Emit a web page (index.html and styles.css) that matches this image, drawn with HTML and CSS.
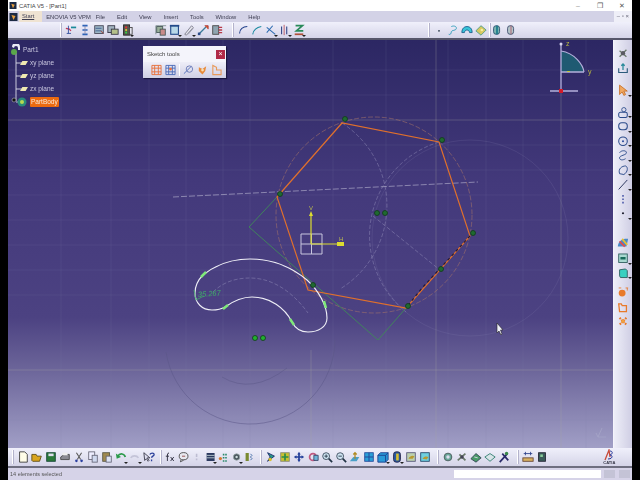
FILE: index.html
```html
<!DOCTYPE html>
<html lang="en">
<head>
<meta charset="utf-8">
<title>CATIA V5 - [Part1]</title>
<link rel="stylesheet" href="styles.css">
</head>
<body>
<svg class="defs" width="0" height="0">
  <symbol id="doc" viewBox="0 0 14 14"><path d="M3 1h6l3 3v9H3z" fill="#fffde8" stroke="#333"/></symbol>
  <symbol id="open" viewBox="0 0 14 14"><path d="M1 11V4h5l1 2h5l-2 6H2z" fill="#d9a520" stroke="#5a4a10"/></symbol>
  <symbol id="save" viewBox="0 0 14 14"><rect x="2" y="2" width="10" height="10" fill="#2a7a3a" stroke="#143"/><rect x="4" y="3" width="6" height="3" fill="#dde"/></symbol>
  <symbol id="print" viewBox="0 0 14 14"><path d="M2 7l4-3h6v6H2z" fill="#8a8a92" stroke="#444"/><rect x="4" y="2" width="6" height="3" fill="#eee"/></symbol>
  <symbol id="cut" viewBox="0 0 14 14"><path d="M4 2l5 8M10 2L5 10" stroke="#555" fill="none" stroke-width="1.2"/><circle cx="4" cy="11.500" r="1.500" fill="#2a3fa0"/><circle cx="10" cy="11.500" r="1.500" fill="#2a3fa0"/></symbol>
  <symbol id="copy" viewBox="0 0 14 14"><rect x="2" y="1" width="7" height="9" fill="#eef" stroke="#667"/><rect x="6" y="5" width="6" height="8" fill="#cfd8ee" stroke="#667"/></symbol>
  <symbol id="paste" viewBox="0 0 14 14"><rect x="2" y="2" width="8" height="10" fill="#a08a50" stroke="#554"/><rect x="6" y="6" width="6" height="7" fill="#dde4f4" stroke="#667"/></symbol>
  <symbol id="undo" viewBox="0 0 14 14"><path d="M3 6c3-4 8-3 9 1" fill="none" stroke="#2a9a4a" stroke-width="2"/><path d="M1 3l1 6 5-2z" fill="#2a9a4a"/></symbol>
  <symbol id="redo" viewBox="0 0 14 14"><path d="M2 8c2-3 7-3 9 0" fill="none" stroke="#c4c4d8" stroke-width="2"/></symbol>
  <symbol id="help" viewBox="0 0 14 14"><path d="M1 2l1 9 2-2 2 3 1-1-2-3h3z" fill="#dde" stroke="#334"/><path d="M8 4c1-2 5-2 5 0s-3 2-3 4M10 10v2" fill="none" stroke="#2a3f9a" stroke-width="1.500"/></symbol>
  <symbol id="fx" viewBox="0 0 14 14"><path d="M5 2c-2 0-2 2-2 4v6M1 6h4M7 7l4 5M11 7l-4 5" fill="none" stroke="#223" stroke-width="1.100"/></symbol>
  <symbol id="bubble" viewBox="0 0 14 14"><ellipse cx="7" cy="6" rx="5.500" ry="4.500" fill="#e8e8f0" stroke="#333"/><path d="M4 10l-1 3 4-2" fill="#e8e8f0" stroke="#333"/><path d="M5 6h4" stroke="#833"/></symbol>
  <symbol id="faded" viewBox="0 0 14 14"><path d="M7 3v4M7 9v2" stroke="#bdbdd2" stroke-width="2"/></symbol>
  <symbol id="table" viewBox="0 0 14 14"><rect x="2" y="2" width="10" height="10" fill="#2c3a60"/><path d="M2 5h10M2 8h10" stroke="#cdd"/></symbol>
  <symbol id="tree" viewBox="0 0 14 14"><circle cx="3" cy="9" r="2" fill="#d87a30"/><path d="M6 4h6M6 8h6M6 12h6" stroke="#2a8a6a" stroke-width="2" stroke-dasharray="2 1"/></symbol>
  <symbol id="gear" viewBox="0 0 14 14"><circle cx="7" cy="7" r="4" fill="#46525a" stroke="#9aa"/><circle cx="7" cy="7" r="1.500" fill="#cdd"/></symbol>
  <symbol id="cube2" viewBox="0 0 14 14"><path d="M2 2h4v10H2z" fill="#7a8a30"/><path d="M8 3l2 2-2 2 2 2-2 2" stroke="#2a5a9a" fill="none"/></symbol>
  <symbol id="fly" viewBox="0 0 14 14"><path d="M3 2l8 4-8 6 3-5z" fill="#2a9a8a" stroke="#126"/><circle cx="6" cy="10" r="2" fill="#d8c030"/></symbol>
  <symbol id="fit" viewBox="0 0 14 14"><rect x="2" y="2" width="10" height="10" fill="#c8c030" stroke="#887"/><path d="M7 3v8M3 7h8" stroke="#2a8a4a" stroke-width="2"/></symbol>
  <symbol id="pan" viewBox="0 0 14 14"><path d="M7 1l2 3H8v2h2V5l3 2-3 2V8H8v2h1l-2 3-2-3h1V8H4v1L1 7l3-2v1h2V4H5z" fill="#24409a"/></symbol>
  <symbol id="rot" viewBox="0 0 14 14"><circle cx="7" cy="7" r="4" fill="none" stroke="#c05a80" stroke-width="2"/><path d="M8 5h5v6H8z" fill="#6fb4d8" stroke="#346"/></symbol>
  <symbol id="zin" viewBox="0 0 14 14"><circle cx="6" cy="6" r="4" fill="#cfe4f2" stroke="#345"/><path d="M9 9l4 4" stroke="#234" stroke-width="2"/><path d="M4 6h4M6 4v4" stroke="#234"/></symbol>
  <symbol id="zout" viewBox="0 0 14 14"><circle cx="6" cy="6" r="4" fill="#cfe4f2" stroke="#345"/><path d="M9 9l4 4" stroke="#234" stroke-width="2"/><path d="M4 6h4" stroke="#234"/></symbol>
  <symbol id="normal" viewBox="0 0 14 14"><path d="M1 12l4-5h7l-3 5z" fill="#4aa0c8"/><path d="M7 9V2M5 4l2-2 2 2" stroke="#b08a20" fill="none" stroke-width="1.500"/></symbol>
  <symbol id="mview" viewBox="0 0 14 14"><rect x="2" y="2" width="10" height="10" fill="#2aa0d8" stroke="#224a9a"/><path d="M7 2v10M2 7h10" stroke="#234a9a" stroke-width="1.200"/></symbol>
  <symbol id="cube" viewBox="0 0 14 14"><path d="M1 5l3-3h9v8l-3 3H1z" fill="#2a9ad8" stroke="#1a3a8a"/><path d="M1 5h9v8M10 5l3-3" fill="none" stroke="#1a3a8a"/></symbol>
  <symbol id="shade" viewBox="0 0 14 14"><rect x="3" y="1" width="8" height="12" rx="3" fill="#2a5aa0" stroke="#224"/><rect x="6" y="3" width="3" height="8" fill="#d8c030"/></symbol>
  <symbol id="hide" viewBox="0 0 14 14"><rect x="2" y="2" width="10" height="10" fill="#bcd0b0" stroke="#557"/><path d="M4 9c2-4 5-4 7-3l-2 3z" fill="#b89a30"/></symbol>
  <symbol id="swap" viewBox="0 0 14 14"><rect x="2" y="2" width="10" height="10" fill="#6fd0e0" stroke="#246"/><path d="M4 9c2-3 5-3 7-2l-2 3z" fill="#b89a30"/></symbol>
  <symbol id="cog2" viewBox="0 0 14 14"><circle cx="7" cy="7" r="4.500" fill="#6aa89a" stroke="#455"/><circle cx="7" cy="7" r="2" fill="#dde"/></symbol>
  <symbol id="pin" viewBox="0 0 14 14"><path d="M2 11l9-8M4 4l7 7" stroke="#6a7a6a" stroke-width="2"/><circle cx="7" cy="7" r="2" fill="#445"/></symbol>
  <symbol id="hat" viewBox="0 0 14 14"><path d="M1 9l6-6 6 5-6 5z" fill="#4a9a6a" stroke="#345"/><path d="M5 7l4 1" stroke="#dde"/></symbol>
  <symbol id="hat2" viewBox="0 0 14 14"><path d="M1 7l6-4 6 4-6 5z" fill="#d8e4e8" stroke="#2a7a6a"/></symbol>
  <symbol id="tool" viewBox="0 0 14 14"><path d="M2 13l9-10M5 3l7 8" stroke="#2a2a6a" stroke-width="2"/><circle cx="10" cy="3" r="2" fill="#3a8a4a"/></symbol>
  <symbol id="ruler" viewBox="0 0 14 14"><path d="M2 3h10M4 1v4M10 1v4" stroke="#2a3f8a"/><rect x="1" y="8" width="12" height="4" fill="#d8b060" stroke="#643"/></symbol>
  <symbol id="box" viewBox="0 0 14 14"><rect x="3" y="2" width="8" height="10" fill="#3a5a58" stroke="#223"/><rect x="5" y="4" width="3" height="3" fill="#8c9"/></symbol>
  <symbol id="t1" viewBox="0 0 14 14"><path d="M1 5l4 1 2 2" fill="none" stroke="#c23a5a" stroke-width="1.500"/><path d="M7 4h6" stroke="#1a8a9a" stroke-width="2"/><path d="M4 2v9M2 11h5" stroke="#2a4a9a"/></symbol>
  <symbol id="t2" viewBox="0 0 14 14"><path d="M4 2h6M4 7h6M4 12h6" stroke="#2a62b8" stroke-width="2"/><path d="M7 2v10" stroke="#88a"/></symbol>
  <symbol id="t3" viewBox="0 0 14 14"><rect x="2" y="2" width="10" height="9" fill="#9ab4c4" stroke="#445"/><path d="M3 5h7M3 8h7" stroke="#3a5a8a"/><path d="M9 8l3 3" stroke="#b83a2a"/></symbol>
  <symbol id="t4" viewBox="0 0 14 14"><rect x="1" y="2" width="8" height="8" fill="#a4b4c0" stroke="#334"/><rect x="5" y="6" width="8" height="6" fill="#b4c08a" stroke="#334"/></symbol>
  <symbol id="t5" viewBox="0 0 14 14"><rect x="3" y="1" width="7" height="12" fill="#56564e" stroke="#222"/><circle cx="6" cy="4" r="1.300" fill="#d33"/><circle cx="6" cy="7" r="1.300" fill="#dc3"/><circle cx="6" cy="10" r="1.300" fill="#3c4"/><rect x="10" y="4" width="3" height="8" fill="#e4e4ee" stroke="#444"/></symbol>
  <symbol id="s1" viewBox="0 0 14 14"><path d="M1 12V2h4l8 0" fill="none" stroke="#7a8a8a"/><rect x="2" y="3" width="7" height="7" fill="#9ab09a" stroke="#455"/><rect x="6" y="6" width="6" height="7" fill="#c88a8a" stroke="#455"/></symbol>
  <symbol id="s2" viewBox="0 0 14 14"><rect x="2" y="2" width="9" height="10" fill="#b8d8e8" stroke="#234a8a" stroke-width="1.300"/><path d="M1 2h11" stroke="#234a8a" stroke-width="2"/></symbol>
  <symbol id="s3" viewBox="0 0 14 14"><path d="M2 12L10 2l2 2-8 9z" fill="#e4e4ec" stroke="#7a7a8a"/><path d="M6 12l6-7" stroke="#9a9aa8"/></symbol>
  <symbol id="s4" viewBox="0 0 14 14"><path d="M2 12L11 3" stroke="#3a7a9a" stroke-width="1.500"/><path d="M9 2h4v4" fill="#d85a30" stroke="#a33"/><rect x="1" y="10" width="3" height="3" fill="#2a4a8a"/></symbol>
  <symbol id="s5" viewBox="0 0 14 14"><rect x="2" y="2" width="7" height="10" fill="#8fa4b0" stroke="#444"/><path d="M9 4h4M9 7h4M9 10h4" stroke="#b83a4a" stroke-width="1.500"/></symbol>
  <symbol id="c1" viewBox="0 0 14 14"><path d="M3 11C3 6 7 3 12 3" fill="none" stroke="#1f3f8a" stroke-width="1.200"/></symbol>
  <symbol id="c2" viewBox="0 0 14 14"><path d="M2 12C3 7 6 4 12 3" fill="none" stroke="#1a8aa0" stroke-width="1.200"/></symbol>
  <symbol id="c3" viewBox="0 0 14 14"><path d="M2 4l10 8M2 10l7-8" stroke="#2a6ab0" stroke-width="1.200"/></symbol>
  <symbol id="c4" viewBox="0 0 14 14"><path d="M3 3v9M9 3v9" stroke="#3a4a8a" stroke-width="1.300"/><path d="M6 1v12" stroke="#b8505a"/></symbol>
  <symbol id="c5" viewBox="0 0 14 14"><path d="M3 2h8L4 8h8" fill="none" stroke="#2a8a5a" stroke-width="2"/><path d="M2 12h10" stroke="#b0503a" stroke-width="2"/></symbol>
  <symbol id="dot" viewBox="0 0 14 14"><circle cx="7" cy="8" r="1" fill="#234"/></symbol>
  <symbol id="spline" viewBox="0 0 14 14"><path d="M2 12c2 1 3-1 3-3s6-1 6-4-4-3-6-2" fill="none" stroke="#2a9ab8"/></symbol>
  <symbol id="hood" viewBox="0 0 14 14"><path d="M1 10c0-5 3-7 6-7s6 2 6 7h-3c0-2-2-3-3-3s-3 1-3 3z" fill="#38c4d8" stroke="#1a5a8a"/></symbol>
  <symbol id="leaf" viewBox="0 0 14 14"><path d="M1 8l6-6 6 5-6 6z" fill="#d8c860" stroke="#4a9a8a"/><circle cx="8" cy="7" r="1.500" fill="#f4f0a0"/></symbol>
  <symbol id="q1" viewBox="0 0 14 14"><rect x="3" y="2" width="7" height="10" rx="3" fill="#7ab4b0" stroke="#244a6a"/><path d="M7 2v10" stroke="#1a7a8a" stroke-width="2"/></symbol>
  <symbol id="q2" viewBox="0 0 14 14"><rect x="3" y="2" width="7" height="10" rx="3" fill="#b4c4c8" stroke="#3a4a6a"/><path d="M7 2v10" stroke="#b05a6a"/></symbol>
  <symbol id="r1" viewBox="0 0 14 14"><path d="M3 11l8-8M3 4l8 7" stroke="#6a7a6a" stroke-width="1.500"/><circle cx="7" cy="7" r="2.500" fill="#5a5a62"/></symbol>
  <symbol id="r2" viewBox="0 0 14 14"><path d="M2 7v5h10V7" fill="none" stroke="#2a5a7a" stroke-width="1.300"/><path d="M7 9V2M5 4l2-2 2 2" fill="none" stroke="#2a8a9a" stroke-width="1.500"/></symbol>
  <symbol id="r3" viewBox="0 0 14 14"><path d="M3 1v11l3-3 2 4 2-1-2-4h4z" fill="#f0a860" stroke="#c8702a"/></symbol>
  <symbol id="r4" viewBox="0 0 14 14"><circle cx="8" cy="4" r="2.500" fill="none" stroke="#2a4a8a"/><rect x="2" y="7" width="10" height="6" rx="2" fill="none" stroke="#2a4a8a" stroke-width="1.200"/></symbol>
  <symbol id="r5" viewBox="0 0 14 14"><rect x="2" y="3" width="10" height="8" rx="3.500" fill="none" stroke="#2a4a8a" stroke-width="1.200"/></symbol>
  <symbol id="r6" viewBox="0 0 14 14"><circle cx="7" cy="7" r="5" fill="none" stroke="#2a4a8a" stroke-width="1.200"/><circle cx="7" cy="7" r="1.200" fill="#2a4a9a"/></symbol>
  <symbol id="r7" viewBox="0 0 14 14"><path d="M3 4c2-3 8-3 8 0s-8 3-8 6 4 3 7 1" fill="none" stroke="#2a4a8a" stroke-width="1.100"/></symbol>
  <symbol id="r8" viewBox="0 0 14 14"><path d="M3 11c-2-6 3-9 7-9 3 1 3 7-2 10z" fill="none" stroke="#2a4a8a" stroke-width="1.100"/></symbol>
  <symbol id="r9" viewBox="0 0 14 14"><path d="M2 13L12 2" stroke="#26305a" stroke-width="1.100"/></symbol>
  <symbol id="r10" viewBox="0 0 14 14"><path d="M7 2v10" stroke="#2a3a9a" stroke-width="1.500" stroke-dasharray="2 2"/></symbol>
  <symbol id="r11" viewBox="0 0 14 14"><circle cx="7" cy="7" r="1.300" fill="#223"/></symbol>
  <symbol id="r12" viewBox="0 0 14 14"><path d="M1 12C1 5 8 2 13 3l-2 9z" fill="#4a8ac8"/><path d="M3 6l6 6" stroke="#e84a4a" stroke-width="2"/><path d="M6 3l6 7" stroke="#e8c030" stroke-width="2"/></symbol>
  <symbol id="r13" viewBox="0 0 14 14"><rect x="2" y="2" width="10" height="10" fill="#a8d8d0" stroke="#2a5a5a"/><path d="M4 7h6" stroke="#186a5a" stroke-width="3"/></symbol>
  <symbol id="r14" viewBox="0 0 14 14"><path d="M3 3l7-1 2 2v8H4l-1-2z" fill="#38d0c0" stroke="#2a5a5a"/></symbol>
  <symbol id="r15" viewBox="0 0 14 14"><circle cx="6" cy="8" r="4" fill="#e87a2a"/><path d="M2 2h3M10 2h3M12 2v3" stroke="#e87a2a"/></symbol>
  <symbol id="r16" viewBox="0 0 14 14"><path d="M2 3h3l1 2h5v7H3z" fill="none" stroke="#e87a2a" stroke-width="1.500"/></symbol>
  <symbol id="r17" viewBox="0 0 14 14"><path d="M3 3l8 8M11 3l-8 8" stroke="#e87a2a" stroke-width="2.500" stroke-dasharray="2 1"/><circle cx="7" cy="7" r="2" fill="#f0a040"/></symbol>
</svg>

<div class="window">
  <header class="titlebar">
    <svg class="app-icon" viewBox="0 0 8 8"><rect width="8" height="8" fill="#1c2a44"/><path d="M2 2l4 1-2 4z" fill="#e8a040"/></svg>
    <span class="title">CATIA V5 - [Part1]</span>
    <span class="win-controls"><span class="min">–</span><span class="max">❐</span><span class="close">✕</span></span>
  </header>
  <nav class="menubar">
    <svg class="menu-icon" viewBox="0 0 8 8"><rect width="8" height="8" fill="#1c2a44"/><path d="M2 2l4 1-2 4z" fill="#e8a040"/></svg>
    <span class="menu-start">Start</span>
    <span class="menu-enovia">ENOVIA V5 VPM</span>
    <span class="menu-item menu-first">File</span>
    <span class="menu-item">Edit</span>
    <span class="menu-item">View</span>
    <span class="menu-item">Insert</span>
    <span class="menu-item">Tools</span>
    <span class="menu-item">Window</span>
    <span class="menu-item">Help</span>
    <span class="doc-controls">– ▫ ×</span>
  </nav>
  <div class="toolbar top">
    <div class="group g1 sep"><svg class="ic"><use href="#t1"/></svg><svg class="ic"><use href="#t2"/></svg><svg class="ic"><use href="#t3"/></svg><svg class="ic"><use href="#t4"/></svg><span class="dd"><svg class="ic"><use href="#t5"/></svg></span></div>
    <div class="group g2"><svg class="ic"><use href="#s1"/></svg><span class="dd"><svg class="ic"><use href="#s2"/></svg></span><span class="dd"><svg class="ic"><use href="#s3"/></svg></span><svg class="ic"><use href="#s4"/></svg><svg class="ic"><use href="#s5"/></svg></div>
    <div class="group g3 sep"><svg class="ic"><use href="#c1"/></svg><svg class="ic"><use href="#c2"/></svg><span class="dd"><svg class="ic"><use href="#c3"/></svg></span><span class="dd"><svg class="ic"><use href="#c4"/></svg></span><span class="dd"><svg class="ic"><use href="#c5"/></svg></span></div>
    <div class="group g4 sep"><svg class="ic"><use href="#dot"/></svg><svg class="ic"><use href="#spline"/></svg><svg class="ic"><use href="#hood"/></svg><svg class="ic"><use href="#leaf"/></svg></div>
    <div class="group g5 sep"><svg class="ic"><use href="#q1"/></svg><svg class="ic"><use href="#q2"/></svg></div>
  </div>

  <main class="main">
    <section class="viewport">
      <svg class="scene" viewBox="8 40 605 408" preserveAspectRatio="none">
        <defs>
          <linearGradient id="bg" x1="0" y1="0" x2="0" y2="1">
            <stop offset="0" stop-color="#2c2763"/>
            <stop offset="0.35" stop-color="#43397b"/>
            <stop offset="0.68" stop-color="#4c4282"/>
            <stop offset="0.8" stop-color="#6a6398"/>
            <stop offset="1" stop-color="#a19fc6"/>
          </linearGradient>
        </defs>
        <rect x="8" y="40" width="605" height="408" fill="url(#bg)"/>
        <g class="grid-minor">
          <path d="M61 40V448M111 40V448M149 40V448M186 40V448M223 40V448M250 40V448M333 40V448M386 40V448M448 40V448M486 40V448M523 40V448M586 40V448"/>
          <path d="M8 70H613M8 95H613M8 145H613M8 170H613M8 195H613M8 220H613M8 245H613M8 270H613M8 295H613M8 370H613M8 395H613M8 420H613"/>
        </g>
        <g class="grid-major">
          <path d="M436 40V448M561 92V448M311 350V448"/>
          <path d="M8 120H613M8 370H613"/>
        </g>
        <g class="construct-faint">
          <circle cx="470" cy="238" r="98"/>
        </g>
        <g class="construct-low">
          <path d="M166 352A85 85 0 0 0 335 340"/>
          <path d="M222 377Q252 395 287 368"/>
        </g>
        <g class="construct">
          <path d="M342 123A98 98 0 0 1 340 289"/>
          <path d="M439 142A98 98 0 0 0 406 312"/>
          <path d="M373 216L440 270"/>
          <path d="M213 292C225 280 240 278 250 278C275 278 295 295 308 313"/>
        </g>
        <path class="dash-line" d="M173 197L478 182"/>
        <circle class="circum" cx="374" cy="215" r="98"/>
        <path class="green-line" d="M277 197L249 227L378 340L406 308"/>
        <path class="orange-line" d="M277 197L342 123L439 142L470 236L406 308L308 290Z"/>
        <path class="dark-dash" d="M470 236L422 288L406 308"/>
        <path class="kidney" d="M203 275C218 263 235 259 250 259C275 259 295 270 307 280C318 290 327 305 327 318C327 327 318 332 308 332C300 332 295 328 292 322C285 308 270 297 252 297C240 297 232 302 225 307C220 310 216 310 212 310C202 310 195 303 195 293C195 285 198 280 203 275Z"/>
        <path class="kidney-hi" d="M201 277L206 272M223 309L228 305M290 319L294 325M324 301L326 308"/>
        <text class="dim" x="198" y="297" transform="rotate(-4 198 297)">35.267</text>
        <path class="dim-line" d="M194 290L196 300L204 296"/>
        <g class="marks">
          <circle cx="345" cy="119" r="2.500"/><circle cx="442" cy="140" r="2.500"/><circle cx="473" cy="233" r="2.500"/>
          <circle cx="280" cy="194" r="2.500"/><circle cx="377" cy="213" r="2.500"/><circle cx="385" cy="213" r="2.500"/>
          <circle cx="441" cy="269" r="2.500"/><circle cx="408" cy="306" r="2.500"/><circle cx="313" cy="285" r="2.500"/>
          <circle class="mark-bright" cx="255" cy="338" r="2.500"/><circle class="mark-bright" cx="263" cy="338" r="2.500"/>
        </g>
        <g class="axis">
          <path class="axis-box" d="M301 234H322V254H301ZM311.500 234V254M301 244H322"/>
          <path class="axis-yellow" d="M311 244V214M311 244H344"/>
          <path class="axis-tip" d="M309 216L311 211L313 216ZM337 242H344V246H337Z"/>
          <text class="axis-label" x="339" y="241">H</text>
          <text class="axis-label" x="309" y="210">V</text>
        </g>
        <g class="compass">
          <path class="c-fill" d="M561 51C575 53 583 65 584 72H561Z"/>
          <path class="c-arc" d="M561 51C575 53 583 65 584 72"/>
          <path class="c-line" d="M561 44V91M550 91H578M561 72H584"/>
          <circle class="c-top" cx="561" cy="44" r="1.500"/>
          <rect class="c-red" x="559" y="89" width="4" height="4"/>
          <text class="c-label" x="566" y="46">z</text>
          <text class="c-label" x="588" y="74">y</text>
          <path class="c-tick" d="M567 71.500H570"/>
        </g>
        <path class="cursor" d="M497 323V333L499 331L501 335L502 334L500.500 330H503Z"/>
        <g class="logo-mini"><path d="M598 437L596 433M598 437H606M598 437L602 428"/></g>
      </svg>

      <aside class="tree">
        <svg class="tree-lines" viewBox="0 0 40 70"><path d="M6 8V58M6 20H12M6 33H12M6 46H12M6 59H12"/><circle class="tree-exp" cx="4" cy="57" r="2"/></svg>
        <div class="tree-row root"><svg class="node-ic" viewBox="0 0 12 12"><path d="M2 3a4 4 0 0 1 8 0v3h-2V4a2 2 0 0 0-4 0z" fill="#e8e8f4"/><circle cx="4" cy="8" r="3" fill="#5aa84a"/></svg><span>Part1</span></div>
        <div class="tree-row plane"><svg class="plane-ic" viewBox="0 0 10 5"><path d="M3 0h7L7 5H0z"/></svg><span>xy plane</span></div>
        <div class="tree-row plane"><svg class="plane-ic" viewBox="0 0 10 5"><path d="M3 0h7L7 5H0z"/></svg><span>yz plane</span></div>
        <div class="tree-row plane"><svg class="plane-ic" viewBox="0 0 10 5"><path d="M3 0h7L7 5H0z"/></svg><span>zx plane</span></div>
        <div class="tree-row body"><svg class="node-ic" viewBox="0 0 12 12"><circle cx="6" cy="6" r="4.500" fill="#2a8a7a"/><circle cx="6" cy="6" r="2" fill="#b8d850"/></svg><span class="selected">PartBody</span></div>
      </aside>

      <div class="palette">
        <div class="palette-head"><span>Sketch tools</span><span class="palette-close">×</span></div>
        <div class="palette-body">
          <svg class="pic" viewBox="0 0 12 12"><path d="M1 1h10v10H1zM1 4h10M1 8h10M4 1v10M8 1v10" fill="none" stroke="#e8703a"/></svg>
          <svg class="pic" viewBox="0 0 12 12"><path d="M1 1h10v10H1zM1 4h10M1 8h10M4 1v10M8 1v10" fill="none" stroke="#4a6ab8"/><circle cx="6" cy="5" r="1.500" fill="#e8703a"/></svg>
          <span class="pal-sep"></span>
          <svg class="pic" viewBox="0 0 12 12"><path d="M1 10L9 2" stroke="#4a6ab8"/><circle cx="7" cy="5" r="3.500" fill="none" stroke="#6a7ab8"/></svg>
          <svg class="pic" viewBox="0 0 12 12"><path d="M2 3l4 2 4-3-1 5-3 4-4-4z" fill="#e88a3a"/><circle cx="6" cy="6" r="1.500" fill="#f8e0b0"/></svg>
          <svg class="pic" viewBox="0 0 12 12"><path d="M2 1v10h9V6H6V3z" fill="none" stroke="#e89a5a" stroke-width="1.200"/></svg>
        </div>
      </div>
    </section>
    <aside class="toolbar side">
      <svg class="ic r-first"><use href="#r1"/></svg><svg class="ic"><use href="#r2"/></svg>
      <span class="dd r-a"><svg class="ic"><use href="#r3"/></svg></span>
      <span class="dd r-b"><svg class="ic"><use href="#r4"/></svg></span><span class="dd"><svg class="ic"><use href="#r5"/></svg></span><span class="dd"><svg class="ic"><use href="#r6"/></svg></span><span class="dd"><svg class="ic"><use href="#r7"/></svg></span><span class="dd"><svg class="ic"><use href="#r8"/></svg></span><span class="dd"><svg class="ic"><use href="#r9"/></svg></span><svg class="ic"><use href="#r10"/></svg><span class="dd"><svg class="ic"><use href="#r11"/></svg></span>
      <svg class="ic r-c"><use href="#r12"/></svg>
      <span class="dd r-d"><svg class="ic"><use href="#r13"/></svg></span><span class="dd"><svg class="ic"><use href="#r14"/></svg></span>
      <svg class="ic r-e"><use href="#r15"/></svg><svg class="ic"><use href="#r16"/></svg><svg class="ic"><use href="#r17"/></svg>
    </aside>
  </main>

  <div class="toolbar bottom">
    <div class="group b1 sep"><svg class="ic"><use href="#doc"/></svg><svg class="ic"><use href="#open"/></svg><svg class="ic"><use href="#save"/></svg><svg class="ic"><use href="#print"/></svg><svg class="ic"><use href="#cut"/></svg><svg class="ic"><use href="#copy"/></svg><svg class="ic"><use href="#paste"/></svg><span class="dd"><svg class="ic"><use href="#undo"/></svg></span><span class="dd"><svg class="ic"><use href="#redo"/></svg></span><svg class="ic"><use href="#help"/></svg></div>
    <div class="group b2 sep"><svg class="ic"><use href="#fx"/></svg><svg class="ic"><use href="#bubble"/></svg><svg class="ic"><use href="#faded"/></svg><span class="dd"><svg class="ic"><use href="#table"/></svg></span><svg class="ic"><use href="#tree"/></svg><span class="dd"><svg class="ic"><use href="#gear"/></svg></span><svg class="ic"><use href="#cube2"/></svg></div>
    <div class="group b3 sep"><svg class="ic"><use href="#fly"/></svg><svg class="ic"><use href="#fit"/></svg><svg class="ic"><use href="#pan"/></svg><svg class="ic"><use href="#rot"/></svg><svg class="ic"><use href="#zin"/></svg><svg class="ic"><use href="#zout"/></svg><svg class="ic"><use href="#normal"/></svg><svg class="ic"><use href="#mview"/></svg><span class="dd"><svg class="ic"><use href="#cube"/></svg></span><span class="dd"><svg class="ic"><use href="#shade"/></svg></span><svg class="ic"><use href="#hide"/></svg><svg class="ic"><use href="#swap"/></svg></div>
    <div class="group b4 sep"><svg class="ic"><use href="#cog2"/></svg><svg class="ic"><use href="#pin"/></svg><svg class="ic"><use href="#hat"/></svg><svg class="ic"><use href="#hat2"/></svg><svg class="ic"><use href="#tool"/></svg></div>
    <div class="group b5 sep"><svg class="ic"><use href="#ruler"/></svg><svg class="ic"><use href="#box"/></svg></div>
    <div class="catia-logo"><svg class="logo-mark" viewBox="0 0 14 12"><path d="M3 11L7 1l1 7" fill="none" stroke="#c84a3a" stroke-width="1.300"/><path d="M8 2c3 0 3 3 0 4 3 0 3 4-2 4" fill="none" stroke="#2a3a9a"/></svg><span>CATIA</span></div>
  </div>
  <footer class="statusbar">
    <span class="status-text">14 elements selected</span>
    <span class="status-field"></span>
    <span class="status-btn"></span>
    <span class="status-btn"></span>
  </footer>
</div>
</body>
</html>
```
FILE: styles.css
```css
* { box-sizing: border-box; }
html, body { margin: 0; height: 100%; background: #000; overflow: hidden; }
body { font-family: "Liberation Sans", Arial, sans-serif; }
.defs { position: absolute; }

.window {
  margin-left: 8px;
  width: 624px;
  height: 480px;
  display: flex;
  flex-direction: column;
  filter: blur(0.4px);
}

.titlebar {
  flex: none;
  height: 11px;
  background: #fff;
  display: flex;
  align-items: center;
  font-size: 5.800px;
  color: #444;
}
.app-icon { width: 8px; height: 7px; margin-left: 1px; }
.title { margin-left: 2px; }
.win-controls { margin-left: auto; display: flex; font-size: 7px; color: #555; }
.win-controls .min { margin-right: 17px; color: #999; }
.win-controls .max { margin-right: 16px; }
.win-controls .close { margin-right: 7px; }

.menubar {
  flex: none;
  height: 11px;
  background: #d3d2e6;
  display: flex;
  align-items: center;
  font-size: 5.800px;
  color: #3c3c50;
}
.menu-icon { width: 9px; height: 8px; margin-left: 1px; }
.menu-start { margin-left: 1px; padding: 0 8px 0 3px; background: #efe3d2; height: 11px; line-height: 10px; text-decoration: underline; }
.menu-enovia { margin-left: 4px; }
.menu-item { margin-left: 12px; }
.menu-first { margin-left: 5px; }
.doc-controls { margin-left: auto; background: #efeff8; font-size: 6px; padding: 0 3px; height: 11px; line-height: 10px; color: #667; }

.toolbar { background: linear-gradient(#f0f0fb, #d5d4e8); }
.toolbar.top {
  flex: none;
  height: 18px;
  display: flex;
  align-items: center;
  border-bottom: 2px solid #56566a;
}
.group { display: flex; align-items: center; position: relative; }
.sep::before {
  content: "";
  position: absolute;
  left: -4px;
  top: 0;
  bottom: 0;
  width: 1px;
  background: #fff;
  box-shadow: 1px 0 0 #b4b3cc;
}
.ic { display: block; width: 14px; height: 14px; flex: none; padding: 1px; }
.dd { position: relative; flex: none; display: block; }
.dd::after {
  content: "";
  position: absolute;
  right: 0;
  bottom: 0;
  border-left: 2px solid transparent;
  border-right: 2px solid transparent;
  border-top: 2px solid #222;
}
.g1 { margin-left: 56px; }
.g2 { margin-left: 20px; }
.g3 { margin-left: 12px; }
.g4 { margin-left: 126px; }
.g5 { margin-left: 2px; }
.g5::before { left: -1px; }

.main { flex: 1; display: flex; min-height: 0; }
.viewport { position: relative; flex: 1; min-width: 0; }
.scene { display: block; width: 100%; height: 100%; }

.grid-minor path { stroke: #8a86b4; stroke-opacity: 0.14; stroke-width: 1; fill: none; }
.grid-major path { stroke: #a8a6a0; stroke-opacity: 0.3; stroke-width: 1; fill: none; }
.construct-faint * { fill: none; stroke: #8d88b4; stroke-opacity: 0.22; stroke-width: 0.8; }
.construct-low path { fill: none; stroke: #5a5688; stroke-opacity: 0.65; stroke-width: 0.8; }
.construct path { fill: none; stroke: #9c98c0; stroke-width: 0.8; stroke-dasharray: 4 2; opacity: 0.55; }
.dash-line { fill: none; stroke: #b4b0cc; stroke-width: 0.8; stroke-dasharray: 6 2; opacity: 0.8; }
.circum { fill: none; stroke: #a0706a; stroke-width: 0.8; stroke-dasharray: 5 2; opacity: 0.75; }
.green-line { fill: none; stroke: #3f8a58; stroke-width: 0.9; }
.orange-line { fill: none; stroke: #e0702c; stroke-width: 1.200; stroke-linejoin: miter; }
.dark-dash { fill: none; stroke: #241a3a; stroke-width: 1.200; stroke-dasharray: 3 3; }
.kidney { fill: none; stroke: #eeeef6; stroke-width: 1.100; }
.kidney-hi { fill: none; stroke: #7fe87a; stroke-width: 2.500; }
.dim { font-size: 7.500px; fill: #3fae68; font-style: italic; }
.dim-line { fill: none; stroke: #3fae68; stroke-width: 0.8; }
.marks circle { fill: #1f6a30; stroke: #123a1a; stroke-width: 0.8; }
.marks .mark-bright { fill: #22b030; stroke: #103a18; }
.axis-box { fill: none; stroke: #c8c6de; stroke-width: 1; }
.axis-yellow { fill: none; stroke: #dcdc30; stroke-width: 1.200; }
.axis-tip { fill: #dcdc30; }
.axis-label { font-size: 6px; fill: #b8b850; }
.c-fill { fill: #1f5a72; }
.c-arc { fill: none; stroke: #b4b0dc; stroke-width: 1.200; }
.c-line { fill: none; stroke: #b4b0dc; stroke-width: 1.300; }
.c-top { fill: #d8d6ee; }
.c-red { fill: #d41a28; }
.c-label { font-size: 7px; fill: #b8b840; }
.c-tick { stroke: #c8c840; }
.cursor { fill: #f0f0f8; stroke: #222; stroke-width: 0.6; }
.logo-mini path { fill: none; stroke: #a8a8c8; stroke-width: 0.7; }

.tree {
  position: absolute;
  left: 2px;
  top: 3px;
  display: flex;
  flex-direction: column;
  font-size: 6.500px;
  color: #c9c7df;
}
.tree-lines { position: absolute; left: 0; top: 0; width: 40px; height: 70px; fill: none; stroke: #dcdcea; stroke-width: 0.9; }
.tree-exp { fill: #111; stroke: #ccc; stroke-width: 0.5; }
.tree-row { display: flex; align-items: center; height: 13px; position: relative; }
.node-ic { width: 12px; height: 12px; margin-right: 1px; }
.root { padding-left: 0; }
.plane { padding-left: 10px; }
.plane-ic { width: 8px; height: 4px; margin-right: 2px; fill: #efe9b0; }
.body { padding-left: 6px; }
.selected { background: #ec6a10; color: #fbe8d8; padding: 0 1px; margin-left: 1px; line-height: 10px; border-radius: 1px; }

.palette {
  position: absolute;
  left: 135px;
  top: 6px;
  width: 83px;
  height: 32px;
  background: #f4f4fb;
  box-shadow: 1px 1px 1px #1a1740;
}
.palette-head {
  height: 16px;
  padding-left: 4px;
  display: flex;
  align-items: center;
  justify-content: space-between;
  font-size: 6px;
  color: #444;
}
.palette-close {
  width: 9px;
  height: 9px;
  margin-right: 1px;
  background: #b02a48;
  color: #fff;
  font-size: 7px;
  line-height: 8px;
  text-align: center;
}
.palette-body { height: 16px; background: linear-gradient(#eeeef8, #cfcfe4); display: flex; align-items: center; padding-left: 8px; gap: 3px; }
.pic { width: 11px; height: 12px; }
.pal-sep { width: 1px; height: 12px; background: #fff; }

.toolbar.side {
  flex: none;
  width: 19px;
  display: flex;
  flex-direction: column;
  align-items: center;
  background: linear-gradient(90deg, #eeeef8, #cfcee4);
  border-left: 1px solid #f4f4fc;
  padding-top: 6px;
}
.side .ic { height: 14.500px; }
.side .dd::after { right: -2px; bottom: 1px; }
.r-a { margin-top: 8px; }
.r-b { margin-top: 7px; }
.r-c { margin-top: 14px; }
.r-d { margin-top: 2px; }
.r-e { margin-top: 5px; }

.toolbar.bottom {
  flex: none;
  height: 20px;
  display: flex;
  align-items: center;
  border-bottom: 2px solid #6e6e80;
}
.b1 { margin-left: 8px; }
.b2 { margin-left: 8px; }
.b2 .ic { width: 13.200px; }
.b3 { margin-left: 8px; }
.b4 { margin-left: 9px; }
.b5 { margin-left: 10px; }
.catia-logo { margin-left: 53px; display: flex; flex-direction: column; align-items: center; font-size: 4px; color: #334; line-height: 4px; font-weight: bold; }
.logo-mark { width: 14px; height: 12px; }

.statusbar {
  flex: none;
  height: 12px;
  background: #d6d3e8;
  display: flex;
  align-items: center;
  font-size: 5.500px;
  color: #555;
}
.status-text { margin-left: 2px; }
.status-field { margin-left: auto; width: 147px; height: 8px; background: #fff; }
.status-btn { width: 11px; height: 8px; margin-left: 3px; background: #c4c3d6; }
.status-btn:last-child { margin-right: 2px; margin-left: 4px; }
```
